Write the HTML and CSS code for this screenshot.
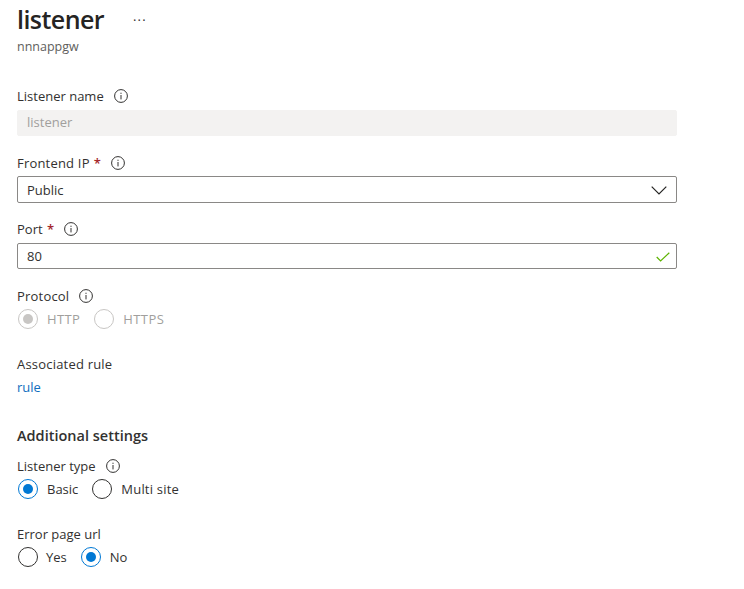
FILE: index.html
```html
<!DOCTYPE html>
<html lang="en">
<head>
<meta charset="utf-8">
<title>listener</title>
<link rel="stylesheet" href="styles.css">
</head>
<body>
<svg class="defs" width="0" height="0" aria-hidden="true">
  <symbol id="info" viewBox="0 0 14 14">
    <circle cx="7" cy="7" r="6.4" fill="none" stroke="currentColor" stroke-width="1"/>
    <rect x="6.5" y="6" width="1" height="4.4" fill="currentColor"/>
    <rect x="6.5" y="3.7" width="1" height="1.2" fill="currentColor"/>
  </symbol>
</svg>
<main class="page">
  <header class="head">
    <div class="title-row">
      <h1 class="title">listener</h1>
      <span class="more">···</span>
    </div>
    <div class="subtitle">nnnappgw</div>
  </header>

  <section class="field f-name">
    <label class="label">Listener name <svg class="info"><use href="#info"/></svg></label>
    <div class="input disabled">listener</div>
  </section>

  <section class="field f-ip">
    <label class="label"><span class="wide">Frontend IP</span> <span class="req">*</span> <svg class="info"><use href="#info"/></svg></label>
    <div class="input">Public
      <svg class="chev" viewBox="0 0 16 9"><path d="M.7.7 8 8 15.3.7" fill="none" stroke="#252423" stroke-width="1.2"/></svg>
    </div>
  </section>

  <section class="field f-port">
    <label class="label">Port <span class="req">*</span> <svg class="info"><use href="#info"/></svg></label>
    <div class="input">80
      <svg class="check" viewBox="0 0 14 10"><path d="M.7 5 4.6 9 13.3.7" fill="none" stroke="#5db300" stroke-width="1.2"/></svg>
    </div>
  </section>

  <section class="field f-proto">
    <label class="label"><span class="wide">Protocol</span> <svg class="info"><use href="#info"/></svg></label>
    <div class="radios off">
      <span class="radio on gray"></span><span class="rtext r-http">HTTP</span>
      <span class="radio"></span><span class="rtext">HTTPS</span>
    </div>
  </section>

  <section class="f-rule">
    <div class="label"><span class="wide">Associated rule</span></div>
    <a class="link" href="#">rule</a>
  </section>

  <h2 class="section-title">Additional settings</h2>

  <section class="field f-type">
    <label class="label">Listener type <svg class="info"><use href="#info"/></svg></label>
    <div class="radios">
      <span class="radio on"></span><span class="rtext r-basic">Basic</span>
      <span class="radio"></span><span class="rtext r-multi">Multi site</span>
    </div>
  </section>

  <section class="field f-err">
    <label class="label">Error page url</label>
    <div class="radios">
      <span class="radio"></span><span class="rtext r-yes">Yes</span>
      <span class="radio on"></span><span class="rtext r-no">No</span>
    </div>
  </section>
</main>
</body>
</html>
```
FILE: styles.css
```css
* { box-sizing: border-box; }
html, body { margin: 0; height: 100%; background: #fff; overflow: hidden; }
body { font-family: "Open Sans", "Noto Sans", sans-serif; font-size: 13px; color: #323130; }
.defs { position: absolute; }
.page { width: 660px; margin-left: 17px; }
.head { height: 87px; }
.title-row { display: flex; align-items: center; height: 40px; }
.title { margin: -2px 0 0; font-size: 25px; font-weight: 600; line-height: 40px; color: #252423; letter-spacing: -.55px; width: 116px; }
.more { font-size: 13px; letter-spacing: 1.2px; color: #323130; line-height: 1; }
.subtitle { margin-top: -1px; font-size: 12.5px; line-height: 16px; color: #605e5c; }
.label { display: flex; align-items: center; height: 18px; line-height: 18px; white-space: pre; color: #323130; }
.wide { letter-spacing: .2px; }
.req { color: #a4262c; font-weight: 600; margin-left: 1px; }
.f-ip .req { margin-left: 4px; }
.info { width: 14px; height: 14px; margin-left: 7px; color: #323130; }
.f-ip .info { margin-left: 10px; }
.f-port .info { margin-left: 10px; }
.f-proto .info { margin-left: 10px; }
.input { position: relative; display: flex; align-items: center; height: 26px; margin-top: 5px; padding-left: 9px; border: 1px solid #8a8886; border-radius: 2px; line-height: 18px; }
.disabled { background: #f3f2f1; border-color: #f3f2f1; color: #a19f9d; padding-bottom: 2px; }
.chev { position: absolute; right: 9px; top: 9px; width: 16px; height: 9px; }
.check { position: absolute; right: 6px; top: 8px; width: 14px; height: 10px; }
.field { display: block; }
.f-name { height: 58px; }
.f-ip { margin-top: 9px; height: 66px; }
.f-ip .input { margin-top: 4px; height: 27px; }
.f-port { height: 67px; }
.f-proto { height: 68px; }
.f-rule { height: 71px; }
.link { display: block; margin-top: 5px; line-height: 18px; color: #106ebe; text-decoration: none; }
.section-title { margin: 0; height: 31px; font-size: 14.5px; font-weight: 600; line-height: 20px; color: #323130; }
.radios { display: flex; align-items: center; height: 20px; margin-top: 4px; }
.radio { flex: none; width: 20px; height: 20px; border: 1px solid #323130; border-radius: 50%; margin-left: 1px; background: #fff; position: relative; }
.radio.on { border-color: #0078d4; }
.radio.on::after { content: ""; position: absolute; left: 4px; top: 4px; width: 10px; height: 10px; border-radius: 50%; background: #0078d4; }
.rtext { margin-left: 9px; line-height: 20px; }
.off .radio { border-color: #c8c6c4; }
.off .radio.on::after { background: #c8c6c4; }
.off .rtext { color: #a19f9d; letter-spacing: .4px; }
.r-http { margin-right: 13px; }
.r-basic { margin-right: 13px; }
.r-multi { letter-spacing: .2px; }
.r-yes { margin-left: 8px; margin-right: 13px; }
.r-no { margin-left: 9px; }
.f-type { height: 68px; }
.f-err { height: 60px; }
```
